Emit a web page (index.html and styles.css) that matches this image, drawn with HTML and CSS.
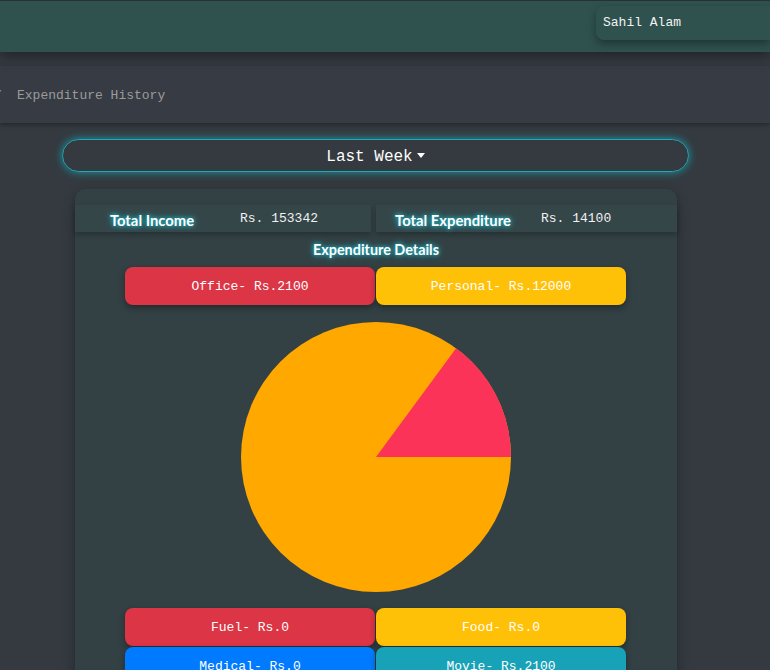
FILE: index.html
```html
<!DOCTYPE html>
<html>
<head>
<meta charset="utf-8">
<link rel="stylesheet" href="styles.css">
</head>
<body>
<header class="topbar">
  <div class="user">Sahil Alam</div>
</header>
<nav class="crumbs"><span class="sep">/</span><span class="crumb">Expenditure History</span></nav>
<main class="main">
  <div class="dropdown">Last Week<span class="caret"></span></div>
  <section class="card">
    <div class="totals">
      <div class="total">
        <span class="label">Total Income</span>
        <span class="value">Rs. 153342</span>
      </div>
      <div class="total">
        <span class="label">Total Expenditure</span>
        <span class="value">Rs. 14100</span>
      </div>
    </div>
    <h2 class="title">Expenditure Details</h2>
    <div class="chips">
      <div class="chip red">Office- Rs.2100</div>
      <div class="chip yellow">Personal- Rs.12000</div>
    </div>
    <svg class="pie" width="270" height="270" viewBox="0 0 270 270">
      <circle cx="135" cy="135" r="135" fill="#ffa800"/>
      <path d="M135 135 L270 135 A135 135 0 0 0 215.1 26.3 Z" fill="#fb3358"/>
    </svg>
    <div class="chips">
      <div class="chip red">Fuel- Rs.0</div>
      <div class="chip yellow">Food- Rs.0</div>
      <div class="chip blue">Medical- Rs.0</div>
      <div class="chip teal">Movie- Rs.2100</div>
    </div>
  </section>
</main>
</body>
</html>
```
FILE: styles.css
```css
html, body {
  margin: 0;
  padding: 0;
}
body {
  background: #343a40;
  font-family: "Liberation Mono", "Courier New", monospace;
  font-size: 13px;
  color: #fff;
  overflow: hidden;
  height: 670px;
}
.topbar {
  height: 52px;
  box-sizing: border-box;
  background: #2f524f;
  border-top: 1px solid #2b3035;
  box-shadow: 0 5px 12px rgba(0, 0, 0, 0.35);
  display: flex;
  justify-content: flex-end;
  align-items: flex-start;
  padding-top: 5px;
  position: relative;
  z-index: 2;
}
.user {
  width: 174px;
  height: 34px;
  line-height: 34px;
  padding-left: 7px;
  box-sizing: border-box;
  background: #2f524f;
  border-radius: 8px 0 0 8px;
  box-shadow: 0 4px 8px rgba(0, 0, 0, 0.35);
  color: #f2f2f2;
}
.crumbs {
  margin-top: 14px;
  height: 57px;
  box-sizing: border-box;
  padding-top: 2px;
  line-height: 55px;
  background: #373b43;
  box-shadow: 0 2px 4px rgba(0, 0, 0, 0.3);
  color: #9b9b9b;
  display: flex;
}
.sep {
  margin-left: -6px;
  width: 23px;
}
.main {
  margin: 16px 0 0 62px;
  width: 627px;
}
.dropdown {
  height: 33px;
  box-sizing: border-box;
  border: 1px solid #20a8b4;
  border-radius: 17px;
  box-shadow: 0 0 8px rgba(23, 170, 184, 0.85);
  text-align: center;
  font-size: 16px;
  line-height: 34px;
  color: #fff;
}
.caret {
  display: inline-block;
  margin-left: 4px;
  vertical-align: 3px;
  border-top: 5px solid #fff;
  border-left: 4.5px solid transparent;
  border-right: 4.5px solid transparent;
}
.card {
  margin: 17px 12px 0 13px;
  background: #334144;
  border-radius: 10px;
  padding-top: 16px;
  min-height: 620px;
  box-shadow: 0 4px 12px rgba(0, 0, 0, 0.3);
}
.totals {
  display: grid;
  grid-template-columns: 296px 1fr;
  gap: 5px;
}
.total {
  height: 27px;
  background: #354649;
  box-shadow: 0 3px 5px rgba(0, 0, 0, 0.25);
  display: grid;
  grid-template-columns: 154px 1fr;
  align-items: center;
}
.label, .title {
  font-family: Lato, "Open Sans", sans-serif;
  font-weight: 700;
  color: #fff;
  text-shadow: 0 0 4px #1fb4c4, 0 0 6px #1fb4c4;
}
.label {
  font-size: 14.8px;
  text-align: center;
  padding-top: 2px;
}
.value {
  padding-left: 11px;
  color: #f0f0f0;
}
.title {
  font-size: 14.4px;
  margin: 8px 0 0;
  text-align: center;
  line-height: 20px;
}
.chips {
  width: 501px;
  margin: 7px 0 0 50px;
  display: grid;
  grid-template-columns: 1fr 1fr;
  gap: 1px;
}
.chip {
  height: 38px;
  line-height: 39px;
  text-align: center;
  border-radius: 8px;
  color: #fff;
  box-shadow: 0 3px 6px rgba(0, 0, 0, 0.35);
}
.red { background: #dc3545; }
.yellow { background: #ffc107; }
.blue { background: #007bff; }
.teal { background: #17a2b8; }
.pie {
  display: block;
  margin: 17px auto 16px;
}
```
